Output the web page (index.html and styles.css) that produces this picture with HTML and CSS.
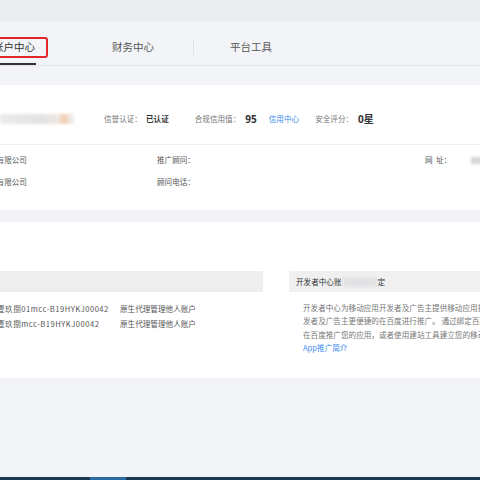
FILE: index.html
```html
<!DOCTYPE html>
<html lang="zh-CN">
<head>
<meta charset="utf-8">
<title>账户中心</title>
<link rel="stylesheet" href="styles.css">
</head>
<body>
<div class="topband"></div>
<nav class="tabs">
  <div class="tab active">账户中心</div>
  <div class="tab second">财务中心</div>
  <div class="sep"></div>
  <div class="tab third">平台工具</div>
</nav>
<main class="content">
  <section class="card info">
    <div class="summary">
      <div class="blur name"></div>
      <span class="label lab-rep">信誉认证：</span><span class="val">已认证</span>
      <span class="label lab-credit">合规信用值：</span><span class="num">95</span>
      <a class="link credit-link">信用中心</a>
      <span class="label lab-safe">安全评分：</span><span class="num">0星</span>
    </div>
    <div class="details">
      <div class="cell c1">技有限公司</div>
      <div class="cell c2">推广顾问：</div>
      <div class="cell c3">网&nbsp;&nbsp;址：<span class="blur site"></span></div>
      <div class="cell c1">技有限公司</div>
      <div class="cell c2">顾问电话：</div>
      <div class="cell c3"></div>
    </div>
  </section>
  <section class="card accounts">
    <div class="cols">
      <div class="left">
        <div class="head"></div>
        <div class="rows">
          <div class="trow"><span class="acc">壹玖捌01mcc-B19HYKJ00042</span><span class="type">原生代理管理他人账户</span></div>
          <div class="trow"><span class="acc">壹玖捌mcc-B19HYKJ00042</span><span class="type">原生代理管理他人账户</span></div>
        </div>
      </div>
      <div class="right">
        <div class="head rhead">开发者中心账<span class="blur hb"></span>定</div>
        <div class="para">
          <div class="line">开发者中心为移动应用开发者及广告主提供移动应用推广服务，帮助开</div>
          <div class="line">发者及广告主更便捷的在百度进行推广。 通过绑定百度推广账户，您可以</div>
          <div class="line">在百度推广您的应用，或者使用建站工具建立您的移动站点。</div>
          <div class="line"><a class="link">App推广简介</a></div>
        </div>
      </div>
    </div>
  </section>
</main>
<div class="taskbar"><span class="task-hl"></span></div>
</body>
</html>
```

FILE: styles.css
```css
html, body {
  margin: 0;
  padding: 0;
}
body {
  width: 480px;
  height: 480px;
  overflow: hidden;
  background: #f3f4f7;
  font-family: "Noto Sans CJK SC", "Noto Sans", sans-serif;
  color: #333;
}
.topband {
  height: 22px;
  background: #ecedf1;
}
.tabs {
  height: 44px;
  box-sizing: border-box;
  border-bottom: 1px solid #e4e5e9;
  background: #f3f4f7;
  display: flex;
  align-items: stretch;
}
.tab {
  position: relative;
  font-size: 10.5px;
  line-height: 34px;
  padding-top: 8px;
  color: #555;
  white-space: nowrap;
}
.tab.active {
  margin-left: -8px;
  width: 44px;
  padding-left: 1px;
  box-sizing: border-box;
  color: #333;
}
.tab.active::after {
  content: "";
  position: absolute;
  left: 0;
  right: 0;
  bottom: 0;
  height: 2px;
  background: #333;
}
.tab.active::before {
  content: "";
  position: absolute;
  left: -8px;
  right: -12px;
  top: 15px;
  height: 21px;
  box-sizing: border-box;
  border: 2px solid #e3262c;
  border-radius: 3px;
}
.tab.second {
  margin-left: 76px;
}
.sep {
  width: 1px;
  height: 15px;
  margin-top: 18px;
  margin-left: 39px;
  background: #dfe0e4;
}
.tab.third {
  margin-left: 36px;
}
.content {
  padding-top: 19px;
}
.card {
  background: #fff;
}
.info {
  height: 125px;
}
.summary {
  height: 60px;
  box-sizing: border-box;
  padding-top: 8px;
  border-bottom: 1px solid #eef0f3;
  display: flex;
  align-items: center;
  font-size: 7.6px;
  white-space: nowrap;
}
.blur {
  display: inline-block;
  filter: blur(1.6px);
}
.name {
  width: 74px;
  height: 10px;
  background: linear-gradient(90deg, #ebebed 0%, #e2e2e5 55%, #efe8e2 78%, #f3c9ab 87%, #eeeae7 95%);
}
.label {
  color: #777;
}
.lab-rep {
  margin-left: 30px;
}
.val {
  margin-left: 4px;
  color: #333;
  font-weight: 700;
}
.lab-credit {
  margin-left: 26px;
}
.num {
  margin-left: 5px;
  font-size: 10px;
  font-weight: 700;
  color: #333;
  font-family: "Open Sans", "Noto Sans CJK SC", sans-serif;
}
.link {
  color: #3c8cf0;
}
.credit-link {
  margin-left: 12px;
}
.lab-safe {
  margin-left: 16px;
}
.details {
  display: grid;
  grid-template-columns: 157px 268px 1fr;
  padding-top: 4px;
  font-size: 7.6px;
  line-height: 22px;
  color: #555;
  white-space: nowrap;
}
.c1 {
  margin-left: -11px;
}
.c3 {
  display: flex;
  align-items: center;
}
.site {
  width: 20px;
  height: 7px;
  margin-left: 20px;
  background: #d6d6d8;
}
.accounts {
  margin-top: 12px;
  height: 156px;
  box-sizing: border-box;
  padding-top: 49px;
}
.cols {
  display: flex;
  gap: 26px;
}
.left {
  width: 263px;
  flex: none;
}
.right {
  flex: 1;
  min-width: 0;
}
.head {
  height: 21px;
  background: #eeeeef;
}
.rhead {
  width: 260px;
  box-sizing: border-box;
  padding-left: 7px;
  display: flex;
  align-items: center;
  font-size: 7.6px;
  color: #333;
  background: #f0f0f1;
  white-space: nowrap;
}
.hb {
  width: 34px;
  height: 10px;
  margin-left: 1px;
  margin-right: 1px;
  background: #e2e2e5;
}
.rows {
  padding-top: 9px;
  font-size: 7.6px;
  line-height: 15px;
  color: #555;
  white-space: nowrap;
}
.trow {
  display: grid;
  grid-template-columns: 123px 1fr;
  margin-left: -3px;
}
.acc {
  letter-spacing: 0.5px;
}
.para {
  padding-top: 9px;
  padding-left: 14px;
  font-size: 7.6px;
  line-height: 13.3px;
  color: #777;
  white-space: nowrap;
}
.taskbar {
  margin-top: 99px;
  height: 3px;
  background: #1c3954;
  position: relative;
}
.task-hl {
  display: block;
  margin-left: 90px;
  width: 36px;
  height: 3px;
  background: #2b6aa5;
}
```
